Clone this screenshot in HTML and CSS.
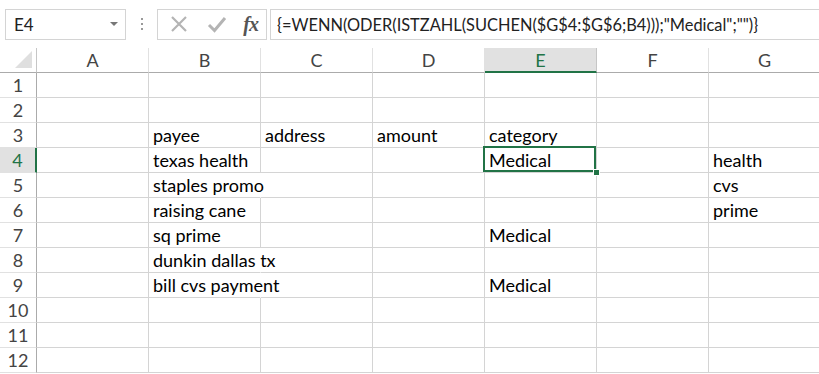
FILE: index.html
```html
<!DOCTYPE html>
<html lang="de">
  <head>
    <meta charset="UTF-8" />
    <title>Mappe1 - Excel</title>
    <link rel="stylesheet" href="styles.css">
  </head>
  <body>
    <div class="formula-bar">
      <div class="name-box">
        <span>E4</span>
        <span class="caret"></span>
      </div>
      <div class="grip">
        <i></i><i></i><i></i>
      </div>
      <div class="fx-buttons">
        <svg class="btn-icon" width="22" height="22" viewBox="0 0 22 22">
          <path d="M4 4 L18 18 M18 4 L4 18" stroke="#b4b4b4" stroke-width="2.2" fill="none" />
        </svg>
        <svg class="btn-icon" width="22" height="22" viewBox="0 0 22 22">
          <path d="M3 12 L8.5 17.5 L19 5" stroke="#b4b4b4" stroke-width="3" fill="none" />
        </svg>
        <span class="fx">fx</span>
      </div>
      <div class="formula">{=WENN(ODER(ISTZAHL(SUCHEN($G$4:$G$6;B4)));"Medical";"")}</div>
    </div>

    <div class="sheet">
      <div class="row head">
        <div class="corner"><span class="tri"></span></div>
        <div class="col-h">A</div>
        <div class="col-h">B</div>
        <div class="col-h">C</div>
        <div class="col-h">D</div>
        <div class="col-h active">E</div>
        <div class="col-h">F</div>
        <div class="col-h">G</div>
      </div>
      <div class="row">
        <div class="row-h">1</div>
        <div class="cell"></div><div class="cell"></div><div class="cell"></div><div class="cell"></div><div class="cell"></div><div class="cell"></div><div class="cell"></div>
      </div>
      <div class="row">
        <div class="row-h">2</div>
        <div class="cell"></div><div class="cell"></div><div class="cell"></div><div class="cell"></div><div class="cell"></div><div class="cell"></div><div class="cell"></div>
      </div>
      <div class="row">
        <div class="row-h">3</div>
        <div class="cell"></div><div class="cell">payee</div><div class="cell">address</div><div class="cell">amount</div><div class="cell">category</div><div class="cell"></div><div class="cell"></div>
      </div>
      <div class="row">
        <div class="row-h active">4</div>
        <div class="cell"></div><div class="cell">texas health</div><div class="cell"></div><div class="cell"></div><div class="cell selected">Medical</div><div class="cell"></div><div class="cell">health</div>
      </div>
      <div class="row">
        <div class="row-h">5</div>
        <div class="cell"></div><div class="cell over">staples promo</div><div class="cell"></div><div class="cell"></div><div class="cell"></div><div class="cell"></div><div class="cell">cvs</div>
      </div>
      <div class="row">
        <div class="row-h">6</div>
        <div class="cell"></div><div class="cell">raising cane</div><div class="cell"></div><div class="cell"></div><div class="cell"></div><div class="cell"></div><div class="cell">prime</div>
      </div>
      <div class="row">
        <div class="row-h">7</div>
        <div class="cell"></div><div class="cell">sq prime</div><div class="cell"></div><div class="cell"></div><div class="cell">Medical</div><div class="cell"></div><div class="cell"></div>
      </div>
      <div class="row">
        <div class="row-h">8</div>
        <div class="cell"></div><div class="cell over">dunkin dallas tx</div><div class="cell"></div><div class="cell"></div><div class="cell"></div><div class="cell"></div><div class="cell"></div>
      </div>
      <div class="row">
        <div class="row-h">9</div>
        <div class="cell"></div><div class="cell over">bill cvs payment</div><div class="cell"></div><div class="cell"></div><div class="cell">Medical</div><div class="cell"></div><div class="cell"></div>
      </div>
      <div class="row">
        <div class="row-h">10</div>
        <div class="cell"></div><div class="cell"></div><div class="cell"></div><div class="cell"></div><div class="cell"></div><div class="cell"></div><div class="cell"></div>
      </div>
      <div class="row">
        <div class="row-h">11</div>
        <div class="cell"></div><div class="cell"></div><div class="cell"></div><div class="cell"></div><div class="cell"></div><div class="cell"></div><div class="cell"></div>
      </div>
      <div class="row">
        <div class="row-h">12</div>
        <div class="cell"></div><div class="cell"></div><div class="cell"></div><div class="cell"></div><div class="cell"></div><div class="cell"></div><div class="cell"></div>
      </div>
    </div>
  </body>
</html>
```

FILE: styles.css
```css
body {
  margin: 0;
  background-color: #fff;
  font-family: Lato, "Liberation Sans", sans-serif;
  color: #000;
  overflow: hidden;
}

.formula-bar {
  display: flex;
  align-items: center;
  height: 48px;
  padding-left: 5px;
  box-sizing: border-box;
}

.name-box {
  display: flex;
  align-items: center;
  justify-content: space-between;
  width: 121px;
  height: 31px;
  box-sizing: border-box;
  border: 1px solid #d4d4d4;
  padding: 0 7px 0 8px;
  font-size: 17px;
  color: #222;
}

.caret {
  width: 0;
  height: 0;
  border-left: 4px solid transparent;
  border-right: 4px solid transparent;
  border-top: 4px solid #777;
}

.grip {
  display: flex;
  flex-direction: column;
  gap: 3px;
  width: 31px;
  align-items: center;
}

.grip i {
  width: 2px;
  height: 2px;
  background-color: #999;
}

.fx-buttons {
  display: flex;
  align-items: center;
  justify-content: space-between;
  width: 110px;
  height: 31px;
  box-sizing: border-box;
  border: 1px solid #d4d4d4;
  padding: 0 8px 0 10px;
}

.fx {
  font-family: "Liberation Serif", serif;
  font-style: italic;
  font-weight: bold;
  font-size: 20px;
  color: #555;
  letter-spacing: -1px;
}

.formula {
  flex: 1;
  height: 31px;
  margin-left: 3px;
  box-sizing: border-box;
  border: 1px solid #d4d4d4;
  border-right: none;
  padding-left: 6px;
  line-height: 29px;
  font-size: 16.4px;
  white-space: nowrap;
  color: #222;
}

.sheet {
  width: 821px;
}

.row {
  display: grid;
  grid-template-columns: 37px repeat(7, 112px);
  height: 25px;
}

.corner,
.col-h,
.row-h,
.cell {
  box-sizing: border-box;
  height: 25px;
}

.corner {
  position: relative;
  border-right: 1px solid #c6c6c6;
  border-bottom: 1px solid #ababab;
}

.tri {
  position: absolute;
  right: 4px;
  bottom: 4px;
  width: 0;
  height: 0;
  border-left: 17px solid transparent;
  border-bottom: 17px solid #dfdfdf;
}

.col-h {
  border-right: 1px solid #e1e1e1;
  border-bottom: 1px solid #ababab;
  text-align: center;
  font-size: 18px;
  line-height: 25px;
  color: #444;
}

.col-h.active {
  background-color: #e1e1e1;
  border-right-color: #c6c6c6;
  border-bottom: 2px solid #217346;
  color: #217346;
  line-height: 24px;
}

.row-h {
  border-right: 1px solid #ababab;
  border-bottom: 1px solid #e1e1e1;
  text-align: center;
  font-size: 18px;
  line-height: 25px;
  color: #444;
}

.row-h.active {
  background-color: #e1e1e1;
  border-right: 2px solid #217346;
  color: #217346;
}

.cell {
  border-right: 1px solid #d4d4d4;
  border-bottom: 1px solid #d4d4d4;
  padding-left: 4px;
  font-size: 18px;
  line-height: 25px;
  white-space: nowrap;
}

.cell.over {
  overflow: visible;
  border-right-color: transparent;
}

.cell.selected {
  position: relative;
}

.cell.selected::before {
  content: "";
  position: absolute;
  left: -2px;
  top: -2px;
  right: 0;
  bottom: 0;
  border: 2px solid #217346;
}

.cell.selected::after {
  content: "";
  position: absolute;
  right: -4px;
  bottom: -4px;
  width: 5px;
  height: 5px;
  background-color: #217346;
  border: 1px solid #fff;
}
```
